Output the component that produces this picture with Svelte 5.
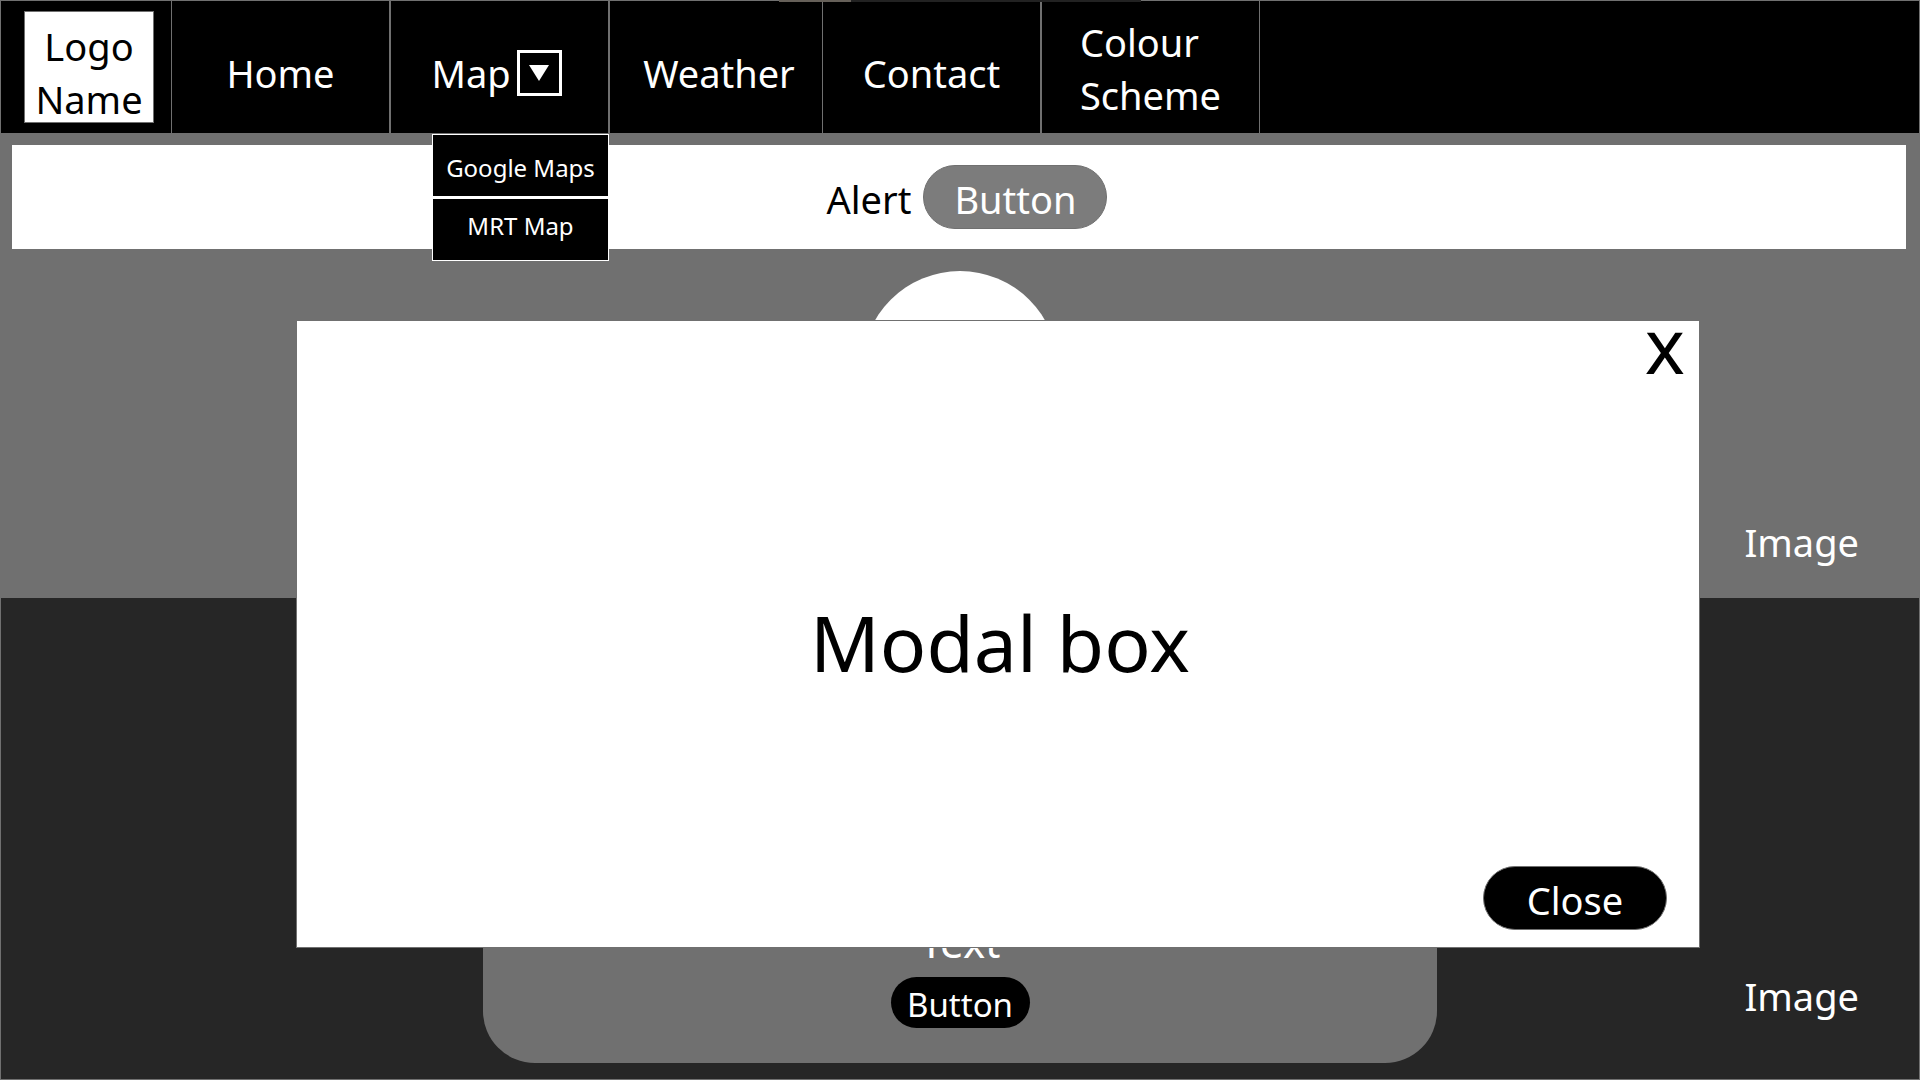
<script>
  let modalOpen = $state(true);
  let menuOpen = $state(true);
</script>

<div class="page">
  <div class="loading" aria-hidden="true"></div>
  <nav class="bar" aria-label="Main">
    <div class="cell brand"><a class="logo" href="#home">Logo<br />Name</a></div>
    <div class="cell wide"><a href="#home">Home</a></div>
    <div class="cell wide map">
      <a href="#map">Map</a>
      <button class="toggle" aria-label="Show maps" aria-expanded={menuOpen} onclick={() => (menuOpen = !menuOpen)}>
        <svg viewBox="0 0 20 16" width="20" height="16" aria-hidden="true"><path d="M0 0H20L10 16Z" fill="#fff" /></svg>
      </button>
      {#if menuOpen}
        <div class="menu">
          <a href="#google">Google Maps</a>
          <a href="#mrt">MRT Map</a>
        </div>
      {/if}
    </div>
    <div class="cell weather"><a href="#weather">Weather</a></div>
    <div class="cell wide"><a href="#contact">Contact</a></div>
    <div class="cell scheme"><a href="#scheme">Colour<br />Scheme</a></div>
  </nav>

  <section class="hero">
    <div class="alert" role="alert">
      <span>Alert</span>
      <button class="pill grey">Button</button>
    </div>
    <div class="circle"></div>
    <span class="label">Image</span>
  </section>

  <section class="lower">
    <div class="card">
      <p>Text</p>
      <button class="small">Button</button>
    </div>
    <span class="label">Image</span>
  </section>

  {#if modalOpen}
    <div class="modal" role="dialog" aria-labelledby="modal-title">
      <button class="dismiss" aria-label="Dismiss" onclick={() => (modalOpen = false)}>x</button>
      <h1 id="modal-title">Modal box</h1>
      <button class="pill black" onclick={() => (modalOpen = false)}>Close</button>
    </div>
  {/if}
</div>

<style>
  :global(body) {
    margin: 0;
    background: #707070;
  }
  .page, .page * {
    box-sizing: border-box;
  }
  .page {
    position: relative;
    display: flex;
    flex-direction: column;
    min-height: 100vh;
    border: 1px solid #707070;
    background: #707070;
    color: #fff;
    font: 38px/53px "Segoe UI", "Noto Sans", "Open Sans", sans-serif;
  }
  a {
    color: inherit;
    text-decoration: none;
  }
  button {
    font: inherit;
    color: inherit;
    border: 0;
    padding: 0;
    cursor: pointer;
  }
  .loading {
    position: absolute;
    top: -1px;
    left: 778px;
    width: 362px;
    height: 2px;
    background: linear-gradient(to right, #666059 72px, #222 72px);
  }
  .bar {
    display: flex;
    height: 132px;
    background: #000;
  }
  .cell {
    display: flex;
    align-items: center;
    justify-content: center;
    padding-top: 12px;
    border-right: 1px solid #707070;
  }
  .brand {
    align-items: flex-start;
    width: 171px;
    padding: 10px 0 0 6px;
  }
  .logo {
    width: 130px;
    height: 112px;
    padding-top: 8px;
    border: 1px solid #707070;
    background: #fff;
    color: #000;
    text-align: center;
  }
  .wide {
    width: 219px;
    border-right-width: 2px;
  }
  .map {
    position: relative;
    gap: 6px;
    padding-right: 6px;
  }
  .toggle {
    display: flex;
    align-items: center;
    justify-content: center;
    width: 45px;
    height: 46px;
    border: 3px solid #fff;
    background: #000;
  }
  .menu {
    position: absolute;
    top: 133px;
    right: -1px;
    z-index: 1;
    display: flex;
    flex-direction: column;
    gap: 3px;
    width: 177px;
    border: 1px solid #fff;
    background: #fff;
    font-size: 24px;
    text-align: center;
  }
  .menu a {
    padding: 6px 0 2px;
    background: #000;
  }
  .menu a + a {
    padding: 0 0 8px;
  }
  .weather {
    width: 213px;
    padding-left: 6px;
  }
  .scheme {
    width: 218px;
    padding-top: 4px;
  }
  .hero {
    display: flex;
    flex-direction: column;
    min-height: 465px;
    padding: 12px 13px 29px 11px;
  }
  .alert {
    display: flex;
    align-items: center;
    justify-content: center;
    gap: 12px;
    min-height: 104px;
    padding-left: 16px;
    background: #fff;
    color: #000;
  }
  .alert span {
    padding-top: 4px;
  }
  .pill {
    width: 184px;
    height: 64px;
    padding-top: 4px;
    border: 1px solid #707070;
    border-radius: 32px;
    color: #fff;
  }
  .grey {
    background: #7c7c7c;
  }
  .black {
    background: #000;
  }
  .circle {
    align-self: center;
    width: 196px;
    height: 196px;
    margin: 22px 0 0 2px;
    border-radius: 50%;
    background: #fff;
  }
  .hero .label {
    align-self: flex-end;
    margin: auto 47px 0 0;
  }
  .lower {
    display: grid;
    grid-template-columns: 1fr 954px 1fr;
    flex: 1;
    padding-bottom: 16px;
    background: #262626;
  }
  .card {
    grid-column: 2;
    display: flex;
    flex-direction: column;
    align-items: center;
    justify-content: flex-end;
    margin-top: 48px;
    padding-bottom: 35px;
    border-radius: 52px;
    background: #707070;
  }
  .card p {
    margin: 0 0 9px;
    font-size: 42px;
  }
  .small {
    width: 139px;
    height: 51px;
    padding-top: 4px;
    border-radius: 26px;
    background: #000;
    font-size: 33px;
    line-height: 46px;
  }
  .lower .label {
    place-self: end;
    margin: 0 60px 40px 0;
  }
  .modal {
    position: absolute;
    top: 319px;
    right: 219px;
    left: 295px;
    display: flex;
    flex-direction: column;
    min-height: 628px;
    padding: 1px 32px 17px;
    border: 1px solid #707070;
    background: #fff;
    color: #000;
  }
  .dismiss {
    align-self: flex-end;
    margin-right: -18px;
    background: none;
    font-size: 76px;
    line-height: 46px;
  }
  h1 {
    display: flex;
    flex: 1;
    align-items: center;
    justify-content: center;
    margin: 0;
    padding: 50px 0 0 4px;
    font-size: 77px;
    font-weight: 400;
  }
  .modal .pill {
    align-self: flex-end;
  }
</style>
